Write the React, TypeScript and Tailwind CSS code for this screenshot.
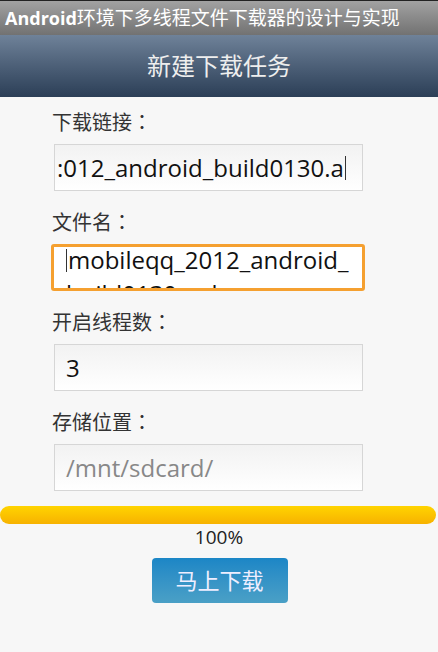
const cjk = { fontFamily: '"Open Sans", "Noto Sans CJK SC", sans-serif' };
const colon = { fontFamily: '"Noto Sans CJK TC", sans-serif' };

function Label({ text }: { text: string }) {
  return (
    <div className="h-[24px] pl-[52px] text-[20px] leading-[24px] text-[#333]">
      {text}
      <span style={colon}>：</span>
    </div>
  );
}

function Input({ children }: { children: React.ReactNode }) {
  return (
    <div className="ml-[54px] mt-[10px] flex h-[47px] w-[309px] items-center overflow-hidden whitespace-nowrap border border-[#d6d6d6] bg-gradient-to-b from-[#f2f2f2] to-white pl-[11px] text-[24px] text-[#111]">
      {children}
    </div>
  );
}

export default function App() {
  return (
    <div className="h-[652px] w-[438px] overflow-hidden bg-[#f7f7f7]" style={cjk}>
      <div className="h-[1px] bg-[#222]" />
      <div className="flex h-[34px] items-center bg-gradient-to-b from-[#a2a2a2] to-[#727272] pl-[5px] text-[19px] text-white">
        <span className="text-[18px] font-bold">Android</span>
        <span>环境下多线程文件下载器的设计与实现</span>
      </div>
      <div className="flex h-[62px] items-center justify-center bg-gradient-to-b from-[#6f8299] to-[#2c3f57] text-[24px] text-[#eee]">
        新建下载任务
      </div>

      <div className="flex flex-col gap-[19px] pt-[13px]">
        <div>
          <Label text="下载链接" />
          <Input>
            <span className="-ml-[9px]">:012_android_build0130.a</span>
            <span className="ml-[1px] inline-block h-[24px] w-[1px] bg-[#333]" />
          </Input>
        </div>
        <div>
          <Label text="文件名" />
          <div className="ml-[51px] mt-[10px] h-[47px] w-[314px] overflow-hidden rounded-[3px] border-[3px] border-[#f5a030] bg-white pl-[12px] text-[24px] leading-[29px] text-[#111]">
            <div className="-mt-[2px] flex items-start">
              <span className="mr-[1px] mt-[4px] inline-block h-[23px] w-[1px] bg-[#333]" />
              <span>mobileqq_2012_android_</span>
            </div>
            <div className="mt-[5px]">build0130.apk</div>
          </div>
        </div>
        <div>
          <Label text="开启线程数" />
          <Input>
            <span>3</span>
          </Input>
        </div>
        <div>
          <Label text="存储位置" />
          <Input>
            <span className="text-[#888]">/mnt/sdcard/</span>
          </Input>
        </div>
      </div>

      <div className="mr-[2px] mt-[15px] h-[18px] rounded-full bg-gradient-to-b from-[#ffd400] to-[#f7b200]" />
      <div className="pt-[1px] text-center text-[19px] leading-[24px] text-[#222]">100%</div>
      <div className="flex justify-center pt-[9px]">
        <div className="ml-[1px] flex h-[45px] w-[136px] items-center justify-center rounded-[4px] bg-gradient-to-b from-[#1b86c6] to-[#4aa0c6] text-[22px] text-[#eef]">
          马上下载
        </div>
      </div>
    </div>
  );
}
